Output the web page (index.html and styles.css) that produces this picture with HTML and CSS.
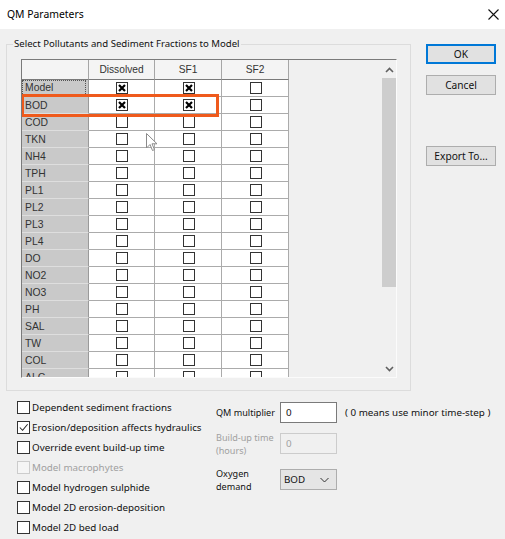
FILE: index.html
```html
<!DOCTYPE html>
<html>
<head>
<meta charset="utf-8">
<title>QM Parameters</title>
<link rel="stylesheet" href="styles.css">
</head>
<body>
<div class="window">
  <div class="titlebar">
    <span class="title">QM Parameters</span>
    <svg class="close" width="11" height="11" viewBox="0 0 11 11"><path d="M0.5 0.5 L10.5 10.5 M10.5 0.5 L0.5 10.5" stroke="#111" stroke-width="1.1" fill="none"/></svg>
  </div>

  <div class="top">
    <fieldset class="group">
      <legend>Select Pollutants and Sediment Fractions to Model</legend>
      <div class="grid-frame">
        <div class="grid">
          <div class="hc"></div><div class="hc">Dissolved</div><div class="hc">SF1</div><div class="hc">SF2</div>

          <div class="rh focus"><span>Model</span></div><div class="c"><i class="cb x"><svg viewBox="0 0 10 10"><path d="M2 2 L8 8 M8 2 L2 8"/></svg></i></div><div class="c"><i class="cb x"><svg viewBox="0 0 10 10"><path d="M2 2 L8 8 M8 2 L2 8"/></svg></i></div><div class="c"><i class="cb"></i></div>
          <div class="rh">BOD</div><div class="c"><i class="cb x"><svg viewBox="0 0 10 10"><path d="M2 2 L8 8 M8 2 L2 8"/></svg></i></div><div class="c"><i class="cb x"><svg viewBox="0 0 10 10"><path d="M2 2 L8 8 M8 2 L2 8"/></svg></i></div><div class="c"><i class="cb"></i></div>
          <div class="rh">COD</div><div class="c"><i class="cb"></i></div><div class="c"><i class="cb"></i></div><div class="c"><i class="cb"></i></div>
          <div class="rh">TKN</div><div class="c"><i class="cb"></i></div><div class="c"><i class="cb"></i></div><div class="c"><i class="cb"></i></div>
          <div class="rh">NH4</div><div class="c"><i class="cb"></i></div><div class="c"><i class="cb"></i></div><div class="c"><i class="cb"></i></div>
          <div class="rh">TPH</div><div class="c"><i class="cb"></i></div><div class="c"><i class="cb"></i></div><div class="c"><i class="cb"></i></div>
          <div class="rh">PL1</div><div class="c"><i class="cb"></i></div><div class="c"><i class="cb"></i></div><div class="c"><i class="cb"></i></div>
          <div class="rh">PL2</div><div class="c"><i class="cb"></i></div><div class="c"><i class="cb"></i></div><div class="c"><i class="cb"></i></div>
          <div class="rh">PL3</div><div class="c"><i class="cb"></i></div><div class="c"><i class="cb"></i></div><div class="c"><i class="cb"></i></div>
          <div class="rh">PL4</div><div class="c"><i class="cb"></i></div><div class="c"><i class="cb"></i></div><div class="c"><i class="cb"></i></div>
          <div class="rh">DO</div><div class="c"><i class="cb"></i></div><div class="c"><i class="cb"></i></div><div class="c"><i class="cb"></i></div>
          <div class="rh">NO2</div><div class="c"><i class="cb"></i></div><div class="c"><i class="cb"></i></div><div class="c"><i class="cb"></i></div>
          <div class="rh">NO3</div><div class="c"><i class="cb"></i></div><div class="c"><i class="cb"></i></div><div class="c"><i class="cb"></i></div>
          <div class="rh">PH</div><div class="c"><i class="cb"></i></div><div class="c"><i class="cb"></i></div><div class="c"><i class="cb"></i></div>
          <div class="rh">SAL</div><div class="c"><i class="cb"></i></div><div class="c"><i class="cb"></i></div><div class="c"><i class="cb"></i></div>
          <div class="rh">TW</div><div class="c"><i class="cb"></i></div><div class="c"><i class="cb"></i></div><div class="c"><i class="cb"></i></div>
          <div class="rh">COL</div><div class="c"><i class="cb"></i></div><div class="c"><i class="cb"></i></div><div class="c"><i class="cb"></i></div>
          <div class="rh">ALC</div><div class="c"><i class="cb"></i></div><div class="c"><i class="cb"></i></div><div class="c"><i class="cb"></i></div>
        </div>
        <div class="vscroll">
          <svg class="arrow" width="9" height="6" viewBox="0 0 9 6"><path d="M1 5 L4.5 1.5 L8 5" stroke="#606060" stroke-width="1.6" fill="none"/></svg>
          <div class="thumb"></div>
          <div class="track"></div>
          <svg class="arrow" width="9" height="6" viewBox="0 0 9 6"><path d="M1 1 L4.5 4.5 L8 1" stroke="#606060" stroke-width="1.6" fill="none"/></svg>
        </div>
        <div class="highlight"></div>
        <svg class="cursor" width="12" height="19" viewBox="0 0 12 19"><path d="M0.5 0.5 L0.5 15 L4 11.5 L6.5 17.5 L8.5 16.6 L6 10.8 L11 10.8 Z" fill="#fff" stroke="#8a8a8a" stroke-width="1"/></svg>
      </div>
    </fieldset>

    <div class="buttons">
      <button class="btn default">OK</button>
      <button class="btn">Cancel</button>
      <button class="btn export">Export To...</button>
    </div>
  </div>

  <div class="bottom">
    <div class="checks">
      <label class="chk"><i class="box"></i>Dependent sediment fractions</label>
      <label class="chk"><i class="box"><svg viewBox="0 0 12 12"><path d="M2 6 L5 9 L10.5 2.5" stroke="#222" stroke-width="1.1" fill="none"/></svg></i>Erosion/deposition affects hydraulics</label>
      <label class="chk"><i class="box"></i>Override event build-up time</label>
      <label class="chk disabled"><i class="box"></i>Model macrophytes</label>
      <label class="chk"><i class="box"></i>Model hydrogen sulphide</label>
      <label class="chk"><i class="box"></i>Model 2D erosion-deposition</label>
      <label class="chk"><i class="box"></i>Model 2D bed load</label>
    </div>

    <div class="params">
      <div class="prow">
        <span class="plabel">QM multiplier</span>
        <span class="field">0</span>
        <span class="note">( 0 means use minor time-step )</span>
      </div>
      <div class="prow">
        <span class="plabel disabled">Build-up time<br>(hours)</span>
        <span class="field off">0</span>
      </div>
      <div class="prow last">
        <span class="plabel">Oxygen<br>demand</span>
        <span class="select">BOD<svg width="9" height="6" viewBox="0 0 9 6"><path d="M0.5 1 L4.5 5 L8.5 1" stroke="#333" stroke-width="1" fill="none"/></svg></span>
      </div>
    </div>
  </div>
</div>
</body>
</html>
```

FILE: styles.css
```css
* { box-sizing: border-box; }

html, body {
  margin: 0;
  padding: 0;
}

body {
  width: 505px;
  height: 539px;
  overflow: hidden;
  background: #f0f0f0;
  font-family: "Noto Sans", "Open Sans", sans-serif;
  font-size: 9.8px;
  color: #111;
}

.window {
  width: 505px;
  height: 539px;
}

/* title bar */
.titlebar {
  height: 29px;
  background: #fff;
  display: flex;
  align-items: center;
  justify-content: space-between;
  padding: 0 6px 2px 7px;
}

.title {
  font-size: 10.4px;
  color: #000;
}

.close { margin-top: 1px; }

/* upper area: group box + buttons */
.top {
  display: flex;
  align-items: flex-start;
  padding: 8px 0 0 6px;
}

.group {
  width: 405px;
  margin: 0;
  padding: 8px 13px 12px 14px;
  border: 1px solid #dcdcdc;
  min-width: 0;
}

.group legend {
  margin-left: -8px;
  padding: 0 1px;
  line-height: 14px;
  font-size: 9.6px;
  color: #111;
}

.grid-frame {
  position: relative;
  width: 376px;
  height: 319px;
  display: flex;
  border-top: 1px solid #7a7a7a;
  border-left: 1px solid #7a7a7a;
  border-right: 1px solid #fbfbfb;
  border-bottom: 1px solid #fbfbfb;
  overflow: hidden;
}

.grid {
  flex: 1;
  display: grid;
  grid-template-columns: 67px 66px 67px 67px;
  grid-template-rows: 20px;
  grid-auto-rows: 17px;
  align-content: start;
  font-family: "Liberation Sans", Arial, sans-serif;
  font-size: 10.4px;
  color: #333;
}

.hc {
  background: #f4f4f4;
  border-right: 1px solid #a6a6a6;
  border-bottom: 1px solid #7a7a7a;
  display: flex;
  align-items: center;
  justify-content: center;
  font-size: 10.2px;
  color: #333;
}

.rh {
  background: #c9c9c9;
  border-right: 1px solid #9a9a9a;
  border-bottom: 1px solid #dedede;
  display: flex;
  align-items: center;
  padding-left: 3px;
  color: #333;
}

.rh.focus span {
  outline: 1px dotted #555;
  outline-offset: 0;
  width: 62px;
  height: 14px;
  line-height: 14px;
  margin-left: -2px;
  padding-left: 2px;
}

.c {
  background: #fff;
  border-right: 1px solid #ababab;
  border-bottom: 1px solid #ababab;
  display: flex;
  align-items: center;
  justify-content: center;
}

.cb {
  display: block;
  width: 12px;
  height: 12px;
  border: 1px solid #333;
  background: #fff;
  margin-left: 1px;
}

.cb svg {
  display: block;
  width: 10px;
  height: 10px;
}

.cb svg path {
  stroke: #000;
  stroke-width: 2.2;
  fill: none;
}

/* vertical scrollbar */
.vscroll {
  width: 14px;
  flex: none;
  display: flex;
  flex-direction: column;
  align-items: center;
  background: #f0f0f0;
}

.vscroll .arrow {
  flex: none;
  margin: 7px 0 5px;
}

.vscroll .arrow:last-child {
  margin: 5px 0 5px;
}

.thumb {
  width: 14px;
  height: 209px;
  background: #cdcdcd;
  flex: none;
}

.track { flex: 1; }

.highlight {
  position: absolute;
  left: -1px;
  top: 34px;
  width: 198px;
  height: 23px;
  border: 3px solid #ef5a1c;
}

.cursor {
  position: absolute;
  left: 124px;
  top: 73px;
}

/* buttons */
.buttons {
  display: flex;
  flex-direction: column;
  margin: 7px 0 0 15px;
}

.btn {
  width: 70px;
  height: 20px;
  padding: 0;
  margin: 0 0 11px;
  background: #e1e1e1;
  border: 1px solid #adadad;
  font-family: inherit;
  font-size: 10.2px;
  color: #111;
}

.btn.default {
  border: 2px solid #0078d7;
}

.btn.export {
  margin-top: 40px;
}

/* lower area */
.bottom {
  display: flex;
  padding: 6px 0 0 17px;
}

.checks {
  width: 199px;
  display: flex;
  flex-direction: column;
}

.chk {
  height: 20px;
  display: flex;
  align-items: center;
  color: #111;
  white-space: nowrap;
}

.chk .box {
  width: 13px;
  height: 13px;
  border: 1px solid #333;
  background: #fff;
  margin-right: 2px;
  flex: none;
}

.chk .box svg {
  display: block;
  width: 11px;
  height: 11px;
}

.chk.disabled { color: #a0a0a0; }
.chk.disabled .box { border-color: #cccccc; background: #f5f5f5; }

.params {
  display: flex;
  flex-direction: column;
  padding-top: 5px;
}

.prow {
  height: 21px;
  display: flex;
  align-items: center;
  margin-bottom: 10px;
}

.prow.last { margin-top: 5px; }

.plabel {
  width: 64px;
  line-height: 13px;
  font-size: 9.1px;
  color: #111;
}

.plabel.disabled { color: #a0a0a0; }

.field {
  width: 57px;
  height: 21px;
  border: 1px solid #7a7a7a;
  background: #fff;
  padding: 3px 0 0 5px;
  line-height: 13px;
}

.field.off {
  background: #f0f0f0;
  border-color: #cccccc;
  color: #a0a0a0;
}

.note {
  margin-left: 8px;
}

.select {
  width: 57px;
  height: 21px;
  border: 1px solid #adadad;
  background: #e5e5e5;
  display: flex;
  align-items: center;
  justify-content: space-between;
  padding: 0 7px 0 3px;
}
```
